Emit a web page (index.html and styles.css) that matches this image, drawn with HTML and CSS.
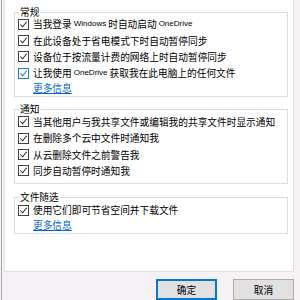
FILE: index.html
```html
<!DOCTYPE html>
<html>
<head>
<meta charset="utf-8">
<link rel="stylesheet" href="styles.css">
</head>
<body>
<div class="dialog">
  <div class="page">

    <fieldset class="group group-general">
      <legend>常规</legend>
      <div class="list">
        <label class="opt"><svg class="box" viewBox="0 0 12 12"><rect x="0.5" y="0.5" width="11" height="11"/><polyline points="2.5,6 5,8.5 9.5,3"/></svg>当我登录 <span class="lat">Windows</span> 时自动启动 <span class="lat">OneDrive</span></label>
        <label class="opt"><svg class="box" viewBox="0 0 12 12"><rect x="0.5" y="0.5" width="11" height="11"/><polyline points="2.5,6 5,8.5 9.5,3"/></svg>在此设备处于省电模式下时自动暂停同步</label>
        <label class="opt"><svg class="box" viewBox="0 0 12 12"><rect x="0.5" y="0.5" width="11" height="11"/><polyline points="2.5,6 5,8.5 9.5,3"/></svg>设备位于按流量计费的网络上时自动暂停同步</label>
        <label class="opt"><svg class="box focus" viewBox="0 0 12 12"><rect x="0.5" y="0.5" width="11" height="11"/><polyline points="2.5,6 5,8.5 9.5,3"/></svg>让我使用 <span class="lat">OneDrive</span> 获取我在此电脑上的任何文件</label>
        <a class="more" href="#">更多信息</a>
      </div>
    </fieldset>

    <fieldset class="group group-notify">
      <legend>通知</legend>
      <div class="list">
        <label class="opt"><svg class="box" viewBox="0 0 12 12"><rect x="0.5" y="0.5" width="11" height="11"/><polyline points="2.5,6 5,8.5 9.5,3"/></svg>当其他用户与我共享文件或编辑我的共享文件时显示通知</label>
        <label class="opt"><svg class="box" viewBox="0 0 12 12"><rect x="0.5" y="0.5" width="11" height="11"/><polyline points="2.5,6 5,8.5 9.5,3"/></svg>在删除多个云中文件时通知我</label>
        <label class="opt"><svg class="box" viewBox="0 0 12 12"><rect x="0.5" y="0.5" width="11" height="11"/><polyline points="2.5,6 5,8.5 9.5,3"/></svg>从云删除文件之前警告我</label>
        <label class="opt"><svg class="box" viewBox="0 0 12 12"><rect x="0.5" y="0.5" width="11" height="11"/><polyline points="2.5,6 5,8.5 9.5,3"/></svg>同步自动暂停时通知我</label>
      </div>
    </fieldset>

    <fieldset class="group group-files">
      <legend>文件随选</legend>
      <div class="list">
        <label class="opt"><svg class="box" viewBox="0 0 12 12"><rect x="0.5" y="0.5" width="11" height="11"/><polyline points="2.5,6 5,8.5 9.5,3"/></svg>使用它们即可节省空间并下载文件</label>
        <a class="more" href="#">更多信息</a>
      </div>
    </fieldset>

  </div>

  <div class="buttons">
    <button class="btn btn-default">确定</button>
    <button class="btn">取消</button>
  </div>
</div>
</body>
</html>
```

FILE: styles.css
```css
html, body {
    margin: 0;
    padding: 0;
}

body {
    background-color: #f5f1f4;
    font-family: "Noto Sans CJK SC", "Noto Sans", sans-serif;
    font-size: 9.7px;
    color: #000;
    width: 300px;
    height: 300px;
    overflow: hidden;
}

.dialog {
    height: 300px;
    border-left: 1px solid #a8a4a7;
    margin-left: 1px;
    display: flex;
    flex-direction: column;
}

.page {
    box-sizing: border-box;
    width: 290px;
    height: 284px;
    margin-left: 2px;
    background-color: #fff;
    border: 1px solid #e4dee3;
    border-top: 0;
    padding: 6px 5px 0 9px;
    display: flex;
    flex-direction: column;
}

.group {
    margin: 0;
    border: 1px solid #dcdcdc;
    padding: 0 0 0 3px;
}

.group legend {
    padding: 0 1px;
    margin-left: 1px;
    line-height: 13px;
}

.group-general { padding-bottom: 2px; }
.group-notify  { margin-top: 6px; padding-bottom: 4px; }
.group-files   { margin-top: 7px; padding-bottom: 2px; }

.list {
    display: flex;
    flex-direction: column;
    margin-top: -3px;
}

.group-notify .list { margin-top: -2px; }
.group-files .list  { margin-top: -2px; }

.opt {
    display: flex;
    align-items: center;
    height: 16.4px;
    line-height: 12px;
    white-space: nowrap;
}

.box {
    width: 11px;
    height: 11px;
    margin-right: 4px;
    flex: none;
}

.box rect {
    fill: #fff;
    stroke: #333;
    stroke-width: 1;
}

.box polyline {
    fill: none;
    stroke: #222;
    stroke-width: 1.1;
}

.box.focus rect,
.box.focus polyline {
    stroke: #0078d7;
}

.lat {
    font-family: "Liberation Sans", Arial, sans-serif;
    font-size: 8px;
    margin: 0 2px;
}

.more {
    align-self: flex-start;
    margin-left: 15px;
    margin-top: 1px;
    line-height: 11px;
    color: #0066cc;
    text-decoration: underline;
}

.buttons {
    display: flex;
    justify-content: flex-end;
    gap: 16px;
    padding: 7px 6px 0 0;
}

.btn {
    box-sizing: border-box;
    width: 61px;
    height: 21px;
    background-color: #e1e1e1;
    border: 1px solid #adadad;
    font-family: "Noto Sans CJK SC", sans-serif;
    font-size: 9.7px;
    color: #000;
    padding: 0;
}

.btn-default {
    border: 2px solid #0078d7;
}
```
